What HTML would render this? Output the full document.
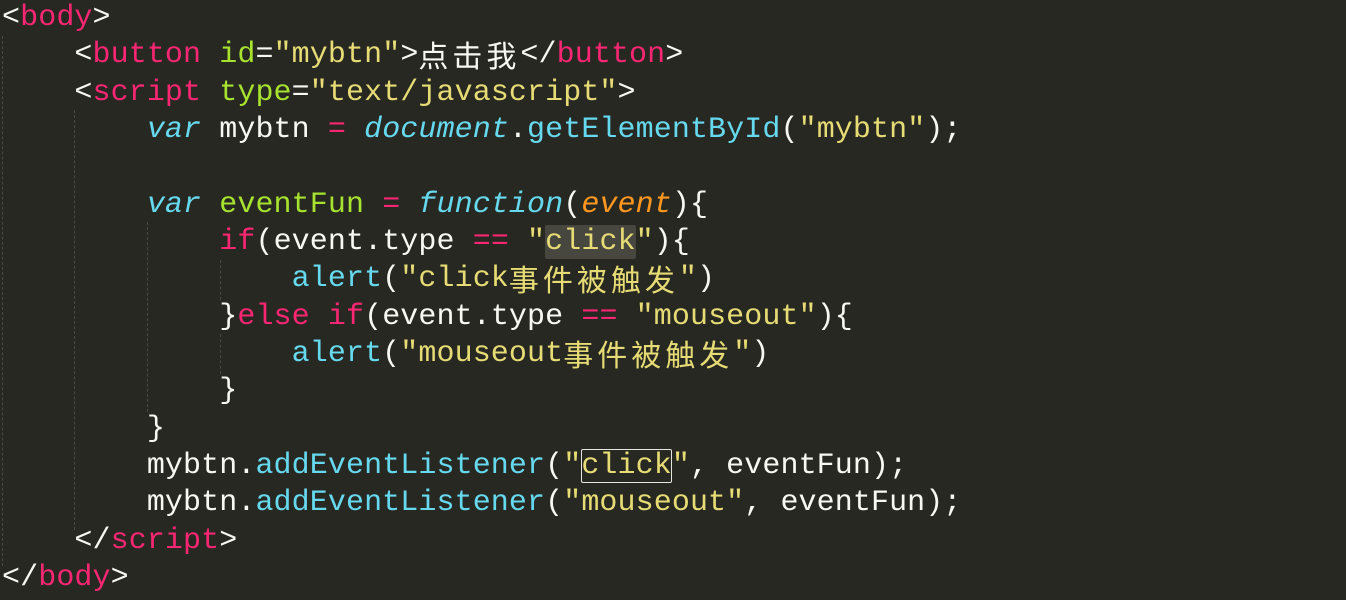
<!DOCTYPE html>
<html><head><meta charset="utf-8"><style>
html,body{margin:0;padding:0;background:#272822;width:1346px;height:600px;overflow:hidden}
#c{position:absolute;left:2px;top:0px;font-family:"Liberation Mono","Noto Sans CJK SC",monospace;font-size:30px;letter-spacing:0.1px;color:#f8f8f2;white-space:pre}
#c div{height:37.33px;line-height:37.33px;overflow:visible}
.p{color:#f92672}.g{color:#a6e22e}.b{color:#66d9ef}.y{color:#e6db74}.i{font-style:italic}.o{color:#fd971f;font-style:italic}
.z{font-family:"Noto Sans CJK SC",sans-serif;letter-spacing:4px;line-height:30px;display:inline-block;vertical-align:top;margin-top:2px}
.guide{position:absolute;width:0;border-left:1px dashed #4a4a42}
.hl{background:#47473f;border-radius:2px}
.bx{outline:1.5px solid #e6e6e0;outline-offset:-1px;border-radius:2px}
</style></head><body>
<div class="guide" style="left:2px;top:36px;height:530px"></div>
<div class="guide" style="left:74px;top:110px;height:420px"></div>
<div class="guide" style="left:147px;top:222px;height:190px"></div>
<div class="guide" style="left:220px;top:260px;height:40px"></div>
<div class="guide" style="left:220px;top:334px;height:40px"></div>
<div id="c"><div>&lt;<span class="p">body</span>&gt;</div><div>    &lt;<span class="p">button</span> <span class="g">id</span>=<span class="y">"mybtn"</span>&gt;<span class="z">点击我</span>&lt;/<span class="p">button</span>&gt;</div><div>    &lt;<span class="p">script</span> <span class="g">type</span>=<span class="y">"text/javascript"</span>&gt;</div><div>        <span class="b i">var</span> mybtn <span class="p">=</span> <span class="b i">document</span>.<span class="b">getElementById</span>(<span class="y">"mybtn"</span>);</div><div> </div><div>        <span class="b i">var</span> <span class="g">eventFun</span> <span class="p">=</span> <span class="b i">function</span>(<span class="o">event</span>){</div><div>            <span class="p">if</span>(event.type <span class="p">==</span> <span class="y">"<span class="hl">click</span>"</span>){</div><div>                <span class="b">alert</span>(<span class="y">"click<span class="z">事件被触发</span>"</span>)</div><div>            }<span class="p">else</span> <span class="p">if</span>(event.type <span class="p">==</span> <span class="y">"mouseout"</span>){</div><div>                <span class="b">alert</span>(<span class="y">"mouseout<span class="z">事件被触发</span>"</span>)</div><div>            }</div><div>        }</div><div>        mybtn.<span class="b">addEventListener</span>(<span class="y">"<span class="bx">click</span>"</span>, eventFun);</div><div>        mybtn.<span class="b">addEventListener</span>(<span class="y">"mouseout"</span>, eventFun);</div><div>    &lt;/<span class="p">script</span>&gt;</div><div>&lt;/<span class="p">body</span>&gt;</div></div>
</body></html>
